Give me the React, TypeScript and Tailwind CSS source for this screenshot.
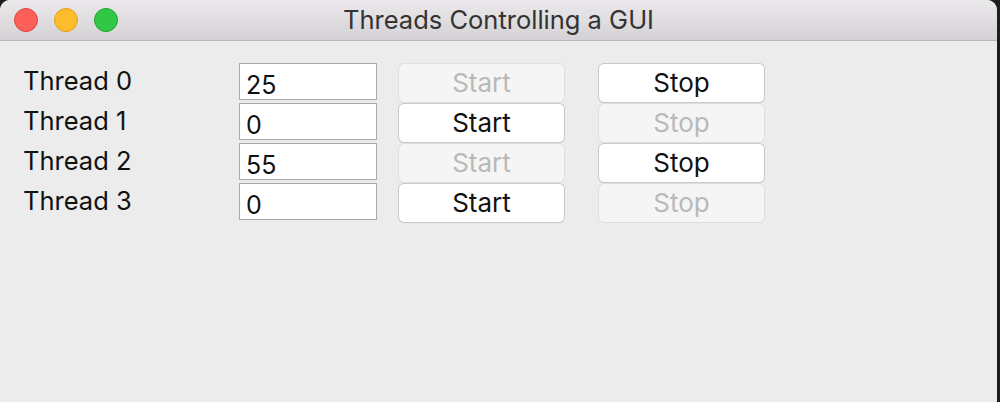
const rows = [
  { label: 'Thread 0', value: '25', running: true },
  { label: 'Thread 1', value: '0', running: false },
  { label: 'Thread 2', value: '55', running: true },
  { label: 'Thread 3', value: '0', running: false },
]

function MacButton({ label, disabled }: { label: string; disabled: boolean }) {
  return (
    <button
      className={
        'h-[38px] w-[165px] rounded-[5px] text-[26px] leading-none ' +
        (disabled
          ? 'bg-[#f5f5f5] text-[#b9b9b9] shadow-[0_0_0_1px_#dedede]'
          : 'bg-white text-[#111] shadow-[0_0_0_1px_#c9c9c9,0_1px_1px_rgba(0,0,0,0.18)]')
      }
    >
      {label}
    </button>
  )
}

export default function App() {
  return (
    <div className="flex h-[402px] w-[1000px] bg-[#1e1e1e] font-['Inter',sans-serif]">
      <div className="flex w-[997px] flex-col overflow-hidden rounded-t-[10px] bg-[#ececec]">
        <div className="relative flex h-[41px] items-center justify-center border-b border-[#b9b7b9] bg-gradient-to-b from-[#ebe9eb] to-[#d4d2d4]">
          <div className="absolute left-[14px] top-[8px] flex gap-[16px]">
            <span className="h-[24px] w-[24px] rounded-full border border-[#e2463f] bg-[#fc5f57]" />
            <span className="h-[24px] w-[24px] rounded-full border border-[#e1a116] bg-[#fdbc2e]" />
            <span className="h-[24px] w-[24px] rounded-full border border-[#1ba62d] bg-[#33c748]" />
          </div>
          <span className="text-[25.5px] text-[#333]">Threads Controlling a GUI</span>
        </div>
        <div className="flex flex-col pl-[23px] pt-[22px]">
          {rows.map((r) => (
            <div key={r.label} className="flex h-[40px] items-start">
              <div className="w-[216px] pt-[3px] text-[25.5px] leading-[30px] text-[#111]">{r.label}</div>
              <div className="h-[37px] w-[138px] border border-[#a9a9a9] bg-white pl-[6px] pt-[7px] text-[25px] leading-[28px] text-[#111]">
                {r.value}
              </div>
              <div className="ml-[22px] mt-[1px]">
                <MacButton label="Start" disabled={r.running} />
              </div>
              <div className="ml-[35px] mt-[1px]">
                <MacButton label="Stop" disabled={!r.running} />
              </div>
            </div>
          ))}
        </div>
      </div>
    </div>
  )
}
